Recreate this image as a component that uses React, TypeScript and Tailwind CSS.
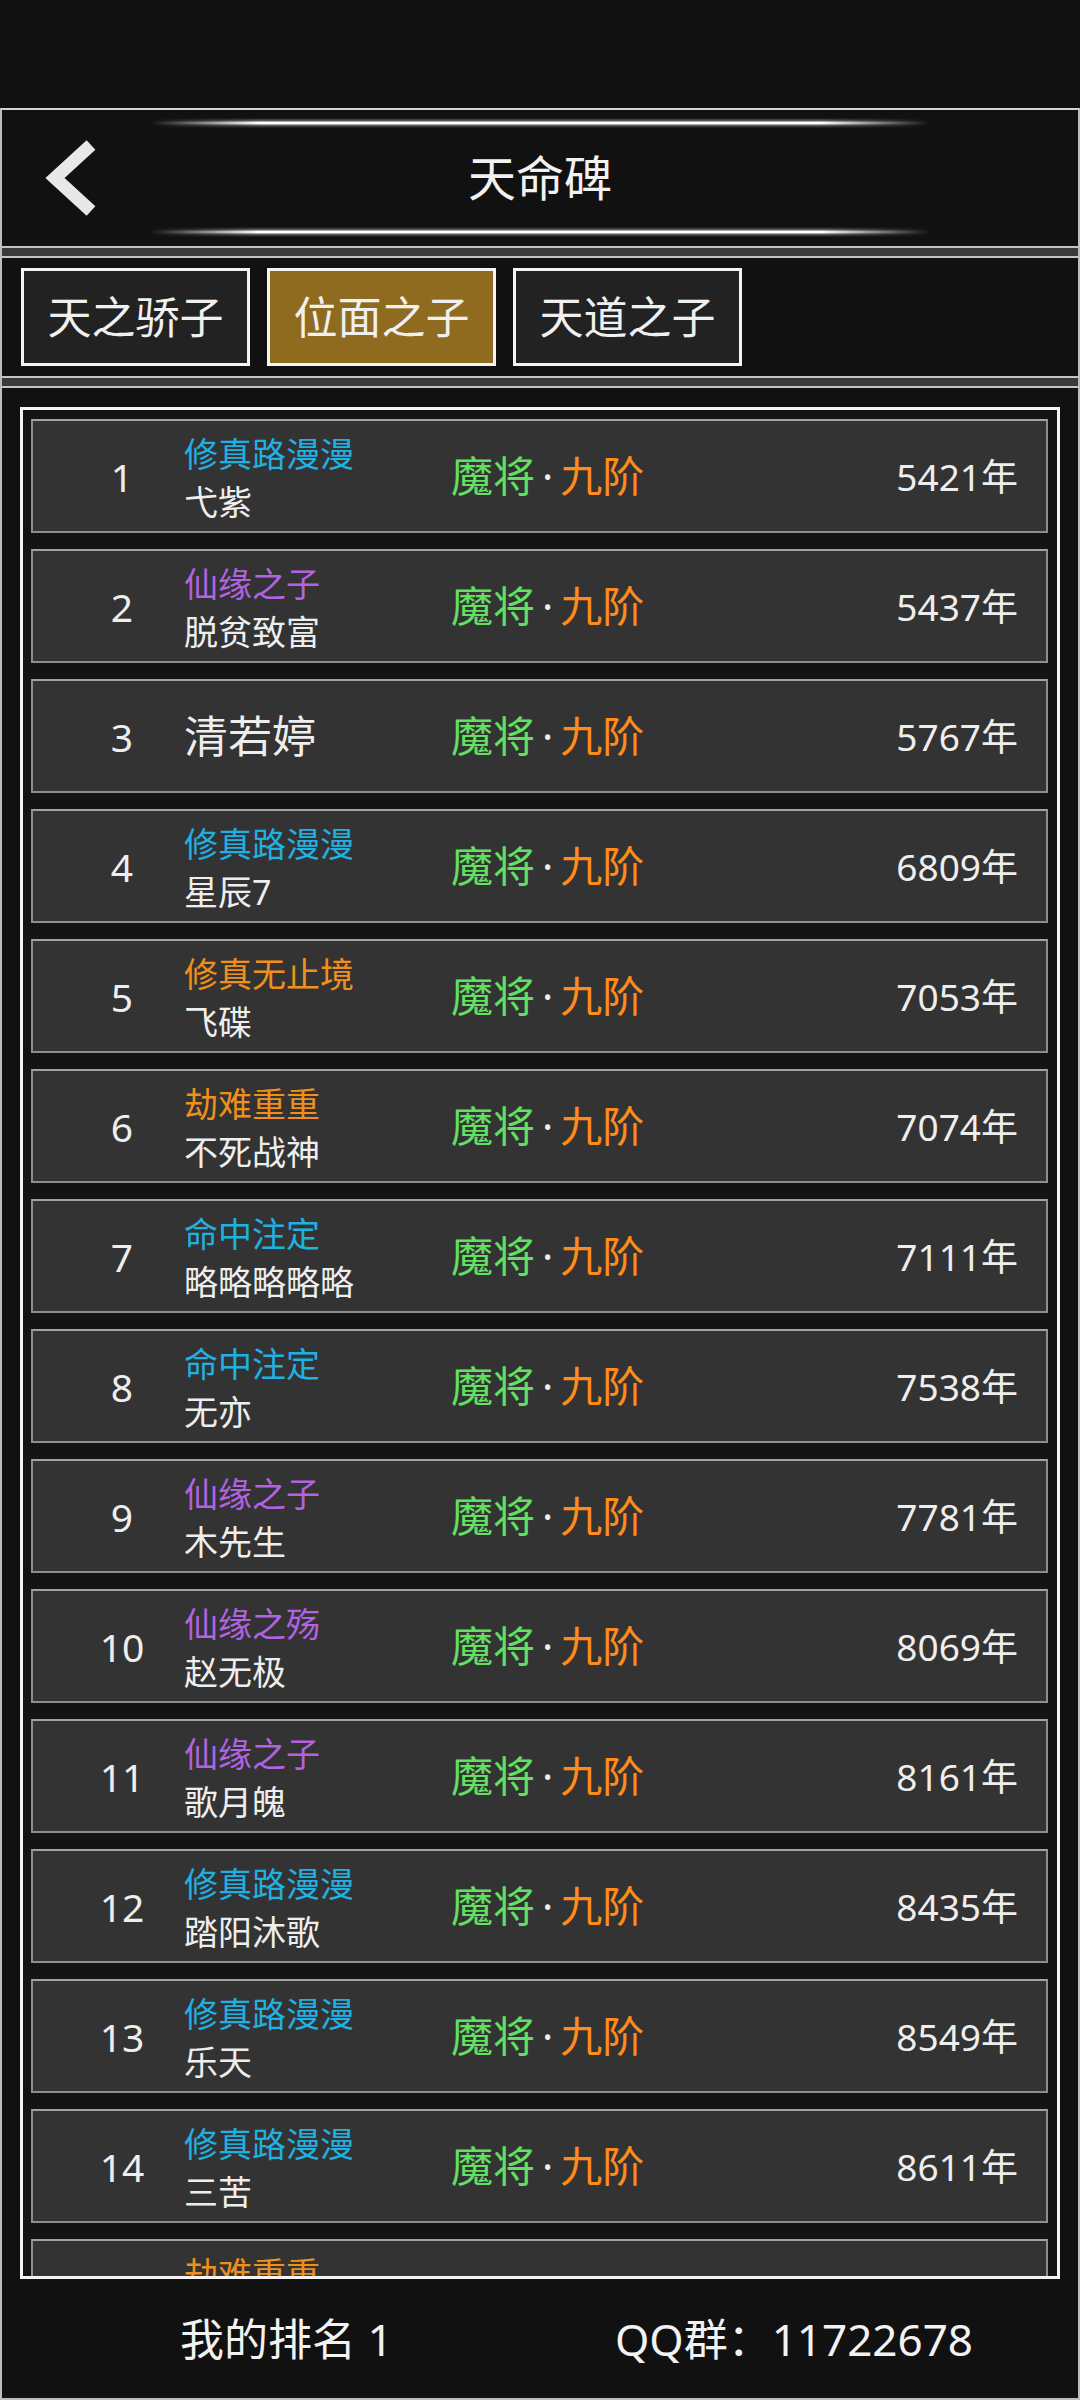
import React from 'react';

type Row = {
  rank: number;
  title?: string;
  tone?: 'cyan' | 'purple' | 'orange';
  name: string;
  years: string;
};

const rows: Row[] = [
  { rank: 1, title: '修真路漫漫', tone: 'cyan', name: '弋紫', years: '5421' },
  { rank: 2, title: '仙缘之子', tone: 'purple', name: '脱贫致富', years: '5437' },
  { rank: 3, name: '清若婷', years: '5767' },
  { rank: 4, title: '修真路漫漫', tone: 'cyan', name: '星辰7', years: '6809' },
  { rank: 5, title: '修真无止境', tone: 'orange', name: '飞碟', years: '7053' },
  { rank: 6, title: '劫难重重', tone: 'orange', name: '不死战神', years: '7074' },
  { rank: 7, title: '命中注定', tone: 'cyan', name: '略略略略略', years: '7111' },
  { rank: 8, title: '命中注定', tone: 'cyan', name: '无亦', years: '7538' },
  { rank: 9, title: '仙缘之子', tone: 'purple', name: '木先生', years: '7781' },
  { rank: 10, title: '仙缘之殇', tone: 'purple', name: '赵无极', years: '8069' },
  { rank: 11, title: '仙缘之子', tone: 'purple', name: '歌月魄', years: '8161' },
  { rank: 12, title: '修真路漫漫', tone: 'cyan', name: '踏阳沐歌', years: '8435' },
  { rank: 13, title: '修真路漫漫', tone: 'cyan', name: '乐天', years: '8549' },
  { rank: 14, title: '修真路漫漫', tone: 'cyan', name: '三苦', years: '8611' },
  // last row is only partly visible at the bottom of the list
  { rank: 15, title: '劫难重重', tone: 'orange', name: '', years: '' },
];

const toneClass = {
  cyan: 'text-[#20b0e2]',
  purple: 'text-[#b262e2]',
  orange: 'text-[#f0901c]',
};

const tabs = ['天之骄子', '位面之子', '天道之子'];

// thin white glow line used above and below the title
function Glow() {
  return (
    <div className="mx-auto h-[10px] w-[780px] bg-[linear-gradient(to_bottom,rgba(255,255,255,0),rgba(255,255,255,0.3)_25%,#ffffff_45%,#ffffff_55%,rgba(255,255,255,0.3)_75%,rgba(255,255,255,0))] [mask-image:linear-gradient(to_right,transparent,#000_14%,#000_86%,transparent)]" />
  );
}

function Divider() {
  return <div className="h-[12px] shrink-0 border-y-2 border-[#c4c4c4] bg-[#3a3a3a]" />;
}

function RankRow({ row }: { row: Row }) {
  const last = !row.years;
  return (
    <div className="flex h-[114px] shrink-0 items-center border-2 border-[#8e8e8e] border-t-[#a2a2a2] bg-[#333333] text-[#eeeeee]">
      <div className="ml-[29px] w-[120px] text-center text-[39px] leading-none">{last ? '' : row.rank}</div>
      <div className="ml-[2px] flex w-[267px] flex-col justify-center">
        {row.title ? (
          <>
            <div className={`h-[53px] text-[34px] leading-[53px] ${toneClass[row.tone ?? 'cyan']}`}>{row.title}</div>
            <div className="h-[43px] text-[34px] leading-[43px]">{row.name}</div>
          </>
        ) : (
          <div className="text-[44px] leading-none">{row.name}</div>
        )}
      </div>
      {!last && (
        <div className="text-[42px] leading-none">
          <span className="text-[#62e062]">魔将</span>
          <span className="px-[7px] text-[#eeeeee]">·</span>
          <span className="text-[#ff8c1a]">九阶</span>
        </div>
      )}
      <div className="ml-auto pr-[28px] text-[37px] leading-none">{row.years ? `${row.years}年` : ''}</div>
    </div>
  );
}

export default function App() {
  return (
    <div className="flex h-[2400px] w-[1080px] flex-col overflow-hidden bg-[#111111] font-['Noto_Sans','Noto_Sans_CJK_SC',sans-serif] text-[#eeeeee]">
      {/* status bar area */}
      <div className="h-[108px] shrink-0" />

      <div className="flex flex-1 flex-col border-2 border-[#bdbdbd] border-t-[#d4d4d4]">
        {/* header */}
        <div className="flex h-[136px] shrink-0 flex-col justify-between pt-[8px] pb-[9px]">
          <Glow />
          <div className="flex flex-1 items-center">
            <div className="w-[130px] pl-[42px]">
              <svg width="54" height="76" viewBox="0 0 54 76" fill="none">
                <polyline points="47,5 11,38 47,71" stroke="#e8e8e8" strokeWidth="13" strokeLinejoin="miter" strokeLinecap="butt" />
              </svg>
            </div>
            <div className="flex-1 text-center text-[48px] leading-none text-[#f2f2f2]">天命碑</div>
            <div className="w-[130px]" />
          </div>
          <Glow />
        </div>

        <Divider />

        {/* tabs */}
        <div className="flex h-[118px] shrink-0 items-center gap-[17px] pl-[19px]">
          {tabs.map((t, i) => (
            <div
              key={t}
              className={`flex h-[98px] w-[229px] items-center justify-center border-[3px] border-[#f4f4f4] text-[44px] leading-none text-[#f0f0f0] ${
                i === 1 ? 'bg-[#8e6b1f]' : 'bg-[#222222]'
              }`}
            >
              {t}
            </div>
          ))}
        </div>

        <Divider />

        {/* ranking list */}
        <div className="flex h-[1891px] shrink-0 flex-col px-[18px] pt-[19px]">
          <div className="flex h-[1872px] flex-col gap-[16px] overflow-hidden border-[3px] border-[#f4f4f4] bg-[#141414] pt-[9px] pr-[9px] pl-[8px]">
            {rows.map((r) => (
              <RankRow key={r.rank} row={r} />
            ))}
          </div>
        </div>

        {/* footer */}
        <div className="flex flex-1 items-center text-[44px] leading-none text-[#f2f2f2]">
          <span className="ml-[178px]">我的排名 1</span>
          <span className="ml-auto mr-[105px]">QQ群：11722678</span>
        </div>
      </div>
    </div>
  );
}
